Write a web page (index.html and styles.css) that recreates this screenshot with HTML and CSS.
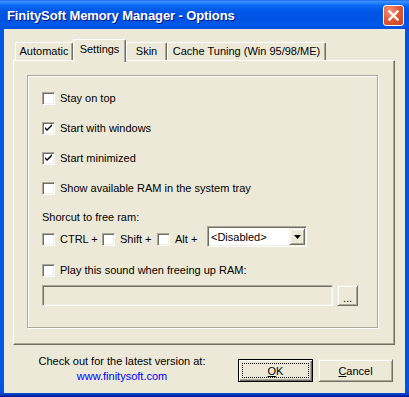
FILE: index.html
```html
<!DOCTYPE html>
<html>
<head>
    <title>FinitySoft Memory Manager - Options</title>
    <link rel="stylesheet" href="styles.css">
</head>
<body>
    <div class="window">
        <div class="titlebar">
            <span class="title">FinitySoft Memory Manager - Options</span>
            <button class="close" type="button">
                <svg width="19" height="19" viewBox="0 0 19 19">
                    <path d="M5.5 5.5 L13.5 13.5 M13.5 5.5 L5.5 13.5" stroke="#fff" stroke-width="2.4" stroke-linecap="square" fill="none"/>
                </svg>
            </button>
        </div>

        <div class="client">
            <div class="tabs">
                <div class="tab tab-automatic">Automatic</div>
                <div class="tab tab-settings active">Settings</div>
                <div class="tab tab-skin">Skin</div>
                <div class="tab tab-cache">Cache Tuning (Win 95/98/ME)</div>
            </div>

            <div class="panel">
                <div class="group">
                    <div class="row">
                        <span class="box"></span>
                        <span>Stay on top</span>
                    </div>
                    <div class="row">
                        <span class="box checked">
                            <svg width="11" height="11" viewBox="0 0 11 11"><path d="M2 4 L2 6 L4 8 L9 3 L9 1 L4 6 Z" fill="#000"/></svg>
                        </span>
                        <span>Start with windows</span>
                    </div>
                    <div class="row">
                        <span class="box checked">
                            <svg width="11" height="11" viewBox="0 0 11 11"><path d="M2 4 L2 6 L4 8 L9 3 L9 1 L4 6 Z" fill="#000"/></svg>
                        </span>
                        <span>Start minimized</span>
                    </div>
                    <div class="row row-last">
                        <span class="box"></span>
                        <span>Show available RAM in the system tray</span>
                    </div>

                    <div class="label">Shorcut to free ram:</div>
                    <div class="shortcut">
                        <span class="box"></span>
                        <span class="key key-ctrl">CTRL +</span>
                        <span class="box"></span>
                        <span class="key key-shift">Shift +</span>
                        <span class="box"></span>
                        <span class="key key-alt">Alt +</span>
                        <div class="combo">
                            <span class="combo-text">&lt;Disabled&gt;</span>
                            <span class="combo-btn">
                                <svg width="7" height="4" viewBox="0 0 7 4"><path d="M0 0 H7 L3.5 4 Z" fill="#000"/></svg>
                            </span>
                        </div>
                    </div>

                    <div class="row row-sound">
                        <span class="box"></span>
                        <span>Play this sound when freeing up RAM:</span>
                    </div>
                    <div class="file-row">
                        <div class="field"></div>
                        <button class="btn btn-browse" type="button">...</button>
                    </div>
                </div>
            </div>

            <div class="footer">
                <div class="info">
                    <div>Check out for the latest version at:</div>
                    <a href="#" class="link">www.finitysoft.com</a>
                </div>
                <div class="buttons">
                    <button class="btn btn-default" type="button"><u>O</u>K</button>
                    <button class="btn" type="button"><u>C</u>ancel</button>
                </div>
            </div>
        </div>
    </div>
</body>
</html>
```

FILE: styles.css
```css
* {
    box-sizing: border-box;
    margin: 0;
    padding: 0;
}

body {
    font-family: 'Liberation Sans', Arial, sans-serif;
    font-size: 11px;
    color: #000;
    background: #0055e5;
}

.window {
    width: 409px;
    height: 397px;
    display: flex;
    flex-direction: column;
    background: linear-gradient(to bottom, #0055e5 0, #0055e5 390px, #0846c8 394px, #00138c 397px);
}

.titlebar {
    height: 29px;
    display: flex;
    align-items: center;
    justify-content: space-between;
    padding: 0 5px 0 7px;
    background: linear-gradient(to bottom,
        #0a5ee8 0, #3d8ffb 1px, #2a84fd 3px, #0b6cf6 5px, #0260ec 8px,
        #0056e6 12px, #0054e3 20px, #0058ea 25px, #004fdb 29px);
}

.title {
    color: #fff;
    font-weight: bold;
    font-size: 13px;
    letter-spacing: -0.1px;
    text-shadow: 1px 1px 0 #0a1883;
    padding-top: 1px;
}

.close {
    width: 21px;
    height: 21px;
    border: 1px solid #fff;
    border-radius: 3px;
    background: radial-gradient(circle at 30% 25%, #f0977a 0, #e35a36 45%, #c8401d 100%);
    display: flex;
    align-items: center;
    justify-content: center;
    margin-top: 1px;
}

.client {
    flex: 1;
    margin: 0 4px 4px;
    background: #ece9d8;
    padding: 10px 0 0 9px;
}

/* tabs */
.tabs {
    display: flex;
    align-items: flex-end;
    height: 21px;
    padding-left: 2px;
}

.tab {
    height: 18px;
    display: flex;
    align-items: center;
    justify-content: center;
    background: #ece9d8;
    border-top: 1px solid #fff;
    border-left: 1px solid #fff;
    border-right: 1px solid #716f64;
    box-shadow: inset -1px 0 0 #aca899;
    border-radius: 2px 2px 0 0;
    padding-bottom: 1px;
}

.tab-automatic { width: 58px; }
.tab-settings { width: 53px; }
.tab-skin { width: 41px; }
.tab-cache { width: 159px; }

.tab.active {
    height: 23px;
    margin-bottom: -2px;
    padding-bottom: 4px;
    position: relative;
    z-index: 1;
}

.panel {
    width: 382px;
    height: 285px;
    border: 1px solid;
    border-color: #fff #716f64 #716f64 #fff;
    box-shadow: inset -1px -1px 0 #aca899;
    padding: 14px 0 0 13px;
}

.group {
    width: 351px;
    height: 253px;
    border: 1px solid #aca899;
    box-shadow: 1px 1px 0 #fff, inset 1px 1px 0 #fff;
    padding: 16px 0 0 14px;
}

/* checkboxes */
.row {
    display: flex;
    align-items: center;
    gap: 5px;
    height: 13px;
    line-height: 13px;
    margin-bottom: 17px;
}

.row-last {
    margin-bottom: 16px;
}

.box {
    width: 13px;
    height: 13px;
    flex: none;
    background: #fff;
    border: 1px solid;
    border-color: #aca899 #fff #fff #aca899;
    box-shadow: inset 1px 1px 0 #716f64, inset -1px -1px 0 #f1efe2;
    display: flex;
    align-items: center;
    justify-content: center;
}

.label {
    line-height: 13px;
    height: 13px;
}

.shortcut {
    display: flex;
    align-items: flex-end;
    height: 21px;
    margin-top: 2px;
    margin-bottom: 17px;
}

.shortcut .box {
    margin-bottom: 1px;
}

.key {
    line-height: 13px;
    margin-bottom: 1px;
    padding-left: 5px;
}

.key-ctrl { width: 47px; }
.key-shift { width: 42px; }
.key-alt { width: 37px; }

.combo {
    width: 100px;
    height: 21px;
    background: #fff;
    border: 1px solid;
    border-color: #aca899 #fff #fff #aca899;
    box-shadow: inset 1px 1px 0 #716f64, inset -1px -1px 0 #f1efe2;
    display: flex;
    align-items: center;
    justify-content: space-between;
    padding: 1px 1px 1px 3px;
}

.combo-btn {
    width: 16px;
    height: 17px;
    background: #ece9d8;
    border: 1px solid;
    border-color: #f1efe2 #716f64 #716f64 #f1efe2;
    box-shadow: inset 1px 1px 0 #fff, inset -1px -1px 0 #aca899;
    display: flex;
    align-items: center;
    justify-content: center;
}

.row-sound {
    margin-bottom: 8px;
}

.file-row {
    display: flex;
    gap: 4px;
}

.field {
    width: 291px;
    height: 21px;
    background: #ece9d8;
    border: 1px solid;
    border-color: #aca899 #fff #fff #aca899;
    box-shadow: inset 1px 1px 0 #716f64, inset -1px -1px 0 #f1efe2;
}

/* buttons */
.btn {
    font-family: inherit;
    font-size: 11px;
    color: #000;
    width: 75px;
    height: 23px;
    background: #ece9d8;
    border: 1px solid;
    border-color: #f1efe2 #716f64 #716f64 #f1efe2;
    box-shadow: inset 1px 1px 0 #fff, inset -1px -1px 0 #aca899;
}

.btn-browse {
    width: 21px;
    height: 21px;
    line-height: 11px;
    padding-top: 5px;
}

.btn-default {
    border: 1px solid #000;
    box-shadow: inset 1px 1px 0 #fff, inset -1px -1px 0 #716f64, inset -2px -2px 0 #aca899;
    outline: 1px dotted #000;
    outline-offset: -5px;
}

.footer {
    display: flex;
    padding: 9px 12px 0 22px;
}

.info {
    flex: none;
    width: 174px;
    text-align: center;
    line-height: 15px;
    white-space: nowrap;
}

.link {
    color: #0000ff;
    text-decoration: none;
}

.buttons {
    display: flex;
    gap: 5px;
    margin-left: auto;
    margin-top: 5px;
}
```
